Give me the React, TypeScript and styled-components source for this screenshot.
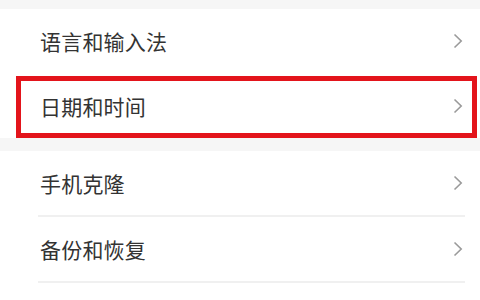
import React from "react";
import styled, { createGlobalStyle } from "styled-components";

const GlobalStyle = createGlobalStyle`
  html, body {
    margin: 0;
    padding: 0;
    background: #f6f6f6;
  }
  body {
    font-family: "Noto Sans CJK SC", "Noto Sans", sans-serif;
  }
`;

const Page = styled.div`
  width: 480px;
  height: 300px;
  overflow: hidden;
  display: flex;
  flex-direction: column;
  gap: 13px;
  padding-top: 9px;
  box-sizing: border-box;
`;

const Group = styled.div<{ $fill?: boolean }>`
  background: #ffffff;
  display: flex;
  flex-direction: column;
  flex: ${({ $fill }) => ($fill ? 1 : "none")};
`;

const Row = styled.div<{ $divider?: boolean; $highlight?: boolean }>`
  position: relative;
  height: ${({ $divider }) => ($divider ? "66px" : "64.5px")};
  display: flex;
  align-items: center;
  padding: 0 17px ${({ $divider }) => ($divider ? "2px" : "0")} 40px;
  box-sizing: border-box;

  ${({ $divider }) =>
    $divider &&
    `
    &::before {
      content: "";
      position: absolute;
      left: 38px;
      right: 15px;
      bottom: 0;
      height: 2px;
      background: #f0f0f0;
    }
  `}

  ${({ $highlight }) =>
    $highlight &&
    `
    &::after {
      content: "";
      position: absolute;
      left: 16px;
      right: 3px;
      top: 2px;
      bottom: 0px;
      border: 5px solid #e3141b;
      pointer-events: none;
    }
  `}
`;

const Label = styled.span`
  flex: 1;
  font-size: 21px;
  color: #333333;
  letter-spacing: 0.2px;
`;

const Chevron = styled.svg`
  width: 10px;
  height: 16px;
  flex-shrink: 0;
`;

const Arrow = () => (
  <Chevron viewBox="0 0 10 16">
    <path d="M1.5 1.5 L8.2 8 L1.5 14.5" fill="none" stroke="#9a9a9a" strokeWidth="1.6" />
  </Chevron>
);

const Item: React.FC<{ label: string; divider?: boolean; highlight?: boolean }> = ({
  label,
  divider,
  highlight,
}) => (
  <Row $divider={divider} $highlight={highlight}>
    <Label>{label}</Label>
    <Arrow />
  </Row>
);

export default function App() {
  return (
    <>
      <GlobalStyle />
      <Page>
        <Group>
          <Item label="语言和输入法" />
          <Item label="日期和时间" highlight />
        </Group>
        <Group $fill>
          <Item label="手机克隆" divider />
          <Item label="备份和恢复" divider />
        </Group>
      </Page>
    </>
  );
}
